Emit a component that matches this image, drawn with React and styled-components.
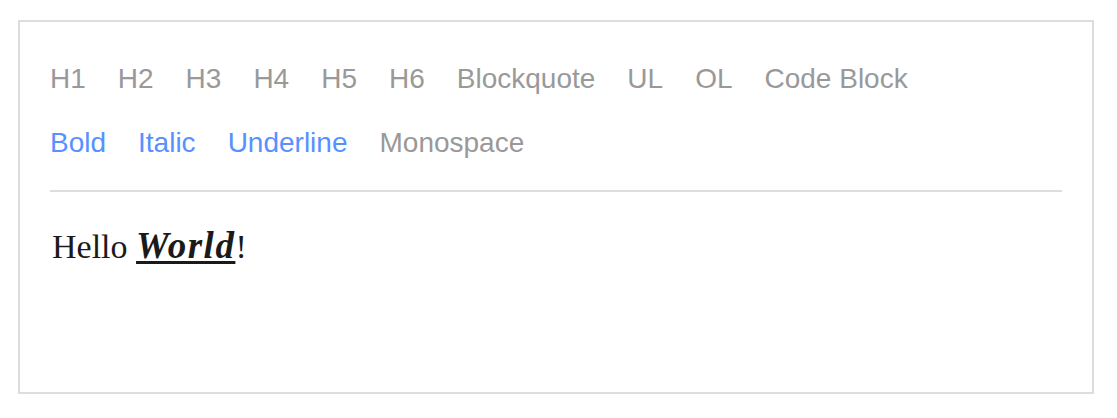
import React from 'react';
import styled, { createGlobalStyle } from 'styled-components';

const GlobalStyle = createGlobalStyle`
  html, body {
    margin: 0;
    padding: 0;
    background: #fff;
  }
`;

const Page = styled.div`
  padding: 20px 0 0 18px;
`;

const EditorRoot = styled.div`
  box-sizing: border-box;
  width: 1076px;
  height: 374px;
  background: #fff;
  border: 2px solid #ddd;
  padding: 41px 30px 0 30px;
  font-family: 'Liberation Serif', 'Times New Roman', serif;
`;

const Controls = styled.div`
  display: flex;
  gap: 32px;
  font-family: 'Liberation Sans', Arial, Helvetica, sans-serif;
  font-size: 28px;
  line-height: 32px;
  margin-bottom: 32px;
  user-select: none;

  & + & {
    margin-bottom: 31px;
  }
`;

const StyleButton = styled.span`
  color: ${({ active }) => (active ? '#5890ff' : '#999')};
  cursor: pointer;
`;

const Editor = styled.div`
  border-top: 2px solid #ddd;
  padding: 34px 0 0 2px;
  font-size: 34px;
  line-height: 40px;
  color: #1a1a1a;
  cursor: text;
`;

const Emphasis = styled.span`
  font-size: 37px;
  font-weight: bold;
  font-style: italic;
  text-decoration: underline;
  text-decoration-thickness: 3px;
  text-underline-offset: 3px;
  letter-spacing: 1.5px;
`;

const BLOCK_TYPES = ['H1', 'H2', 'H3', 'H4', 'H5', 'H6', 'Blockquote', 'UL', 'OL', 'Code Block'];

const INLINE_STYLES = [
  { label: 'Bold', active: true },
  { label: 'Italic', active: true },
  { label: 'Underline', active: true },
  { label: 'Monospace', active: false },
];

const App = () => (
  <Page>
    <GlobalStyle />
    <EditorRoot>
      <Controls>
        {BLOCK_TYPES.map((label) => (
          <StyleButton key={label}>{label}</StyleButton>
        ))}
      </Controls>
      <Controls>
        {INLINE_STYLES.map(({ label, active }) => (
          <StyleButton key={label} active={active}>{label}</StyleButton>
        ))}
      </Controls>
      <Editor>
        Hello <Emphasis>World</Emphasis>!
      </Editor>
    </EditorRoot>
  </Page>
);

export default App;
